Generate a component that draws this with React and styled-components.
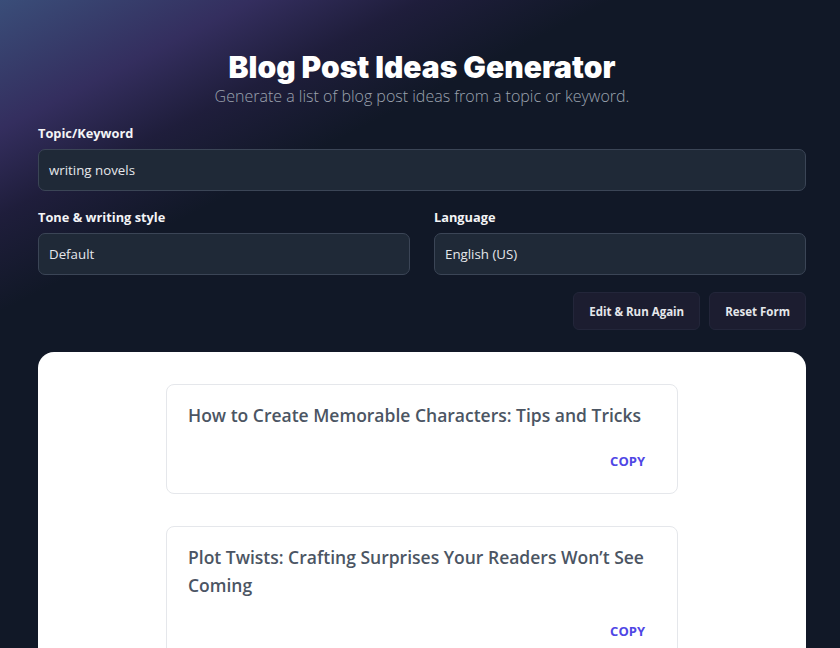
import React from "react";
import styled, { createGlobalStyle } from "styled-components";

const Global = createGlobalStyle`
  html, body { margin: 0; padding: 0; background: #111827; }
  body { font-family: "Open Sans", "Noto Sans", sans-serif; }
  * { box-sizing: border-box; }
`;

const Page = styled.div`
  background:
    linear-gradient(153deg, rgba(60,80,125,0.95) 0%, rgba(58,50,104,0.85) 12%, rgba(42,34,76,0.55) 20%, rgba(17,24,39,0) 29%),
    #111827;
  padding: 48px 34px 0 38px;
  overflow: hidden;
  height: 648px;
`;

const Header = styled.header`
  text-align: center;
  margin-bottom: 18px;
`;

const Title = styled.h1`
  margin: 0;
  font-family: "Inter", "Open Sans", sans-serif;
  font-weight: 900;
  font-size: 30px;
  line-height: 38px;
  color: #ffffff;
`;

const Subtitle = styled.p`
  margin: 0;
  font-weight: 300;
  font-size: 16px;
  line-height: 20px;
  color: #9ca3af;
`;

const Field = styled.div`
  display: flex;
  flex-direction: column;
  gap: 7px;
`;

const Label = styled.label`
  font-size: 12.8px;
  font-weight: 700;
  color: #f3f4f6;
  line-height: 18px;
`;

const Input = styled.div`
  height: 42px;
  border: 1px solid #3b4556;
  border-radius: 7px;
  background: #1f2937;
  color: #e5e7eb;
  font-size: 13.3px;
  display: flex;
  align-items: center;
  padding: 0 10px;
`;

const Row = styled.div`
  display: grid;
  grid-template-columns: 1fr 1fr;
  gap: 24px;
  margin-top: 17px;
`;

const Actions = styled.div`
  display: flex;
  justify-content: flex-end;
  gap: 9px;
  margin-top: 17px;
`;

const Button = styled.button`
  height: 38px;
  padding: 0 15px;
  border-radius: 6px;
  border: 1px solid #23263a;
  background: #1c1d30;
  color: #e5e7eb;
  font-family: inherit;
  font-size: 11.5px;
  font-weight: 700;
`;

const Panel = styled.section`
  margin-top: 22px;
  background: #ffffff;
  border-radius: 16px;
  padding: 32px 0 40px;
  display: flex;
  flex-direction: column;
  align-items: center;
  gap: 32px;
  min-height: 400px;
`;

const Card = styled.article`
  width: 512px;
  border: 1px solid #e5e7eb;
  border-radius: 8px;
  padding: 16px 32px 23px 21px;
  display: flex;
  flex-direction: column;
`;

const CardTitle = styled.h2`
  margin: 0;
  font-size: 17.5px;
  line-height: 28px;
  font-weight: 600;
  color: #4b5563;
`;

const Copy = styled.button`
  align-self: flex-end;
  margin-top: 23px;
  background: none;
  border: none;
  padding: 0;
  font-family: inherit;
  font-size: 13px;
  font-weight: 700;
  color: #4f46e5;
  line-height: 18px;
`;

const ideas = [
  "How to Create Memorable Characters: Tips and Tricks",
  "Plot Twists: Crafting Surprises Your Readers Won\u2019t See Coming",
];

export default function App() {
  return (
    <>
      <Global />
      <Page>
        <Header>
          <Title>Blog Post Ideas Generator</Title>
          <Subtitle>Generate a list of blog post ideas from a topic or keyword.</Subtitle>
        </Header>
        <Field>
          <Label>Topic/Keyword</Label>
          <Input>writing novels</Input>
        </Field>
        <Row>
          <Field>
            <Label>Tone &amp; writing style</Label>
            <Input>Default</Input>
          </Field>
          <Field>
            <Label>Language</Label>
            <Input>English (US)</Input>
          </Field>
        </Row>
        <Actions>
          <Button>Edit &amp; Run Again</Button>
          <Button>Reset Form</Button>
        </Actions>
        <Panel>
          {ideas.map((t) => (
            <Card key={t}>
              <CardTitle>{t}</CardTitle>
              <Copy>COPY</Copy>
            </Card>
          ))}
        </Panel>
      </Page>
    </>
  );
}
